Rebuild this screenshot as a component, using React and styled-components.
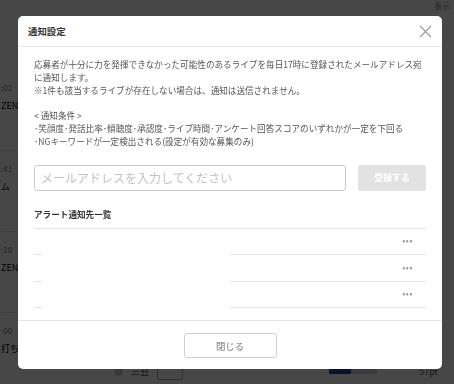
import React from "react"
import styled, { createGlobalStyle } from "styled-components"

const GlobalStyle = createGlobalStyle`
  html, body {
    margin: 0;
    padding: 0;
    width: 454px;
    height: 384px;
    overflow: hidden;
    font-family: "Noto Sans CJK JP", "Noto Sans", sans-serif;
  }
`;

/* background page (dimmed by the overlay) */
const Page = styled.div`
  position: relative;
  width: 454px;
  height: 384px;
  background: #fff;
  overflow: hidden;
`;
const PageTop = styled.div`
  display: flex;
  justify-content: flex-end;
  height: 70px;
  padding-right: 4px;
  font-size: 8px;
  color: #888;
`;
const SideList = styled.div`
  display: flex;
  flex-direction: column;
  padding-left: 1px;
  width: 60px;
`;
const SideRow = styled.div`
  display: flex;
  flex-direction: column;
  gap: 6px;
  height: 81px;
  padding-top: 12px;
  box-sizing: border-box;
  border-bottom: 1px solid #ddd;
  font-size: 9px;
  color: #000;
`;
const SideTime = styled.span`
  color: #777;
  font-size: 8px;
`;
const BottomBar = styled.div`
  position: absolute;
  left: 0;
  right: 0;
  bottom: 4px;
  display: flex;
  align-items: center;
  padding-left: 114px;
  gap: 8px;
  font-size: 9px;
  color: #555;
`;
const SmallBox = styled.div`
  width: 24px;
  height: 16px;
  border: 1px solid #aaa;
  border-radius: 2px;
`;
const Meter = styled.div`
  display: flex;
  margin-left: 138px;
  width: 48px;
  height: 6px;
  background: #ccd;
`;
const MeterFill = styled.div`
  width: 22px;
  background: #1c4aa0;
`;
const Pt = styled.span`
  margin-left: auto;
  margin-right: 16px;
`;

/* modal */
const Overlay = styled.div`
  position: fixed;
  inset: 0;
  background: rgba(0, 0, 0, 0.72);
  display: flex;
  align-items: flex-start;
  padding: 16px 0 0 18px;
`;
const Modal = styled.div`
  width: 424px;
  background: #fff;
  border-radius: 5px;
  display: flex;
  flex-direction: column;
  color: #555;
`;
const Header = styled.div`
  display: flex;
  align-items: center;
  justify-content: space-between;
  height: 30px;
  padding: 0 10px;
  border-bottom: 1px solid #e6e6e6;
`;
const Title = styled.h1`
  margin: 0;
  font-size: 9.4px;
  font-weight: 700;
  color: #333;
`;
const CloseButton = styled.button`
  display: flex;
  padding: 0;
  border: none;
  background: none;
  cursor: pointer;
`;
const Body = styled.div`
  padding: 11px 16px 12px;
`;
const Notice = styled.div`
  font-size: 8.6px;
  line-height: 12.8px;
  color: #555;
  p {
    margin: 0;
  }
`;
const FormRow = styled.div`
  display: flex;
  gap: 12px;
  margin-top: 17px;
`;
const EmailInput = styled.input`
  flex: 1;
  height: 26px;
  box-sizing: border-box;
  border: 1px solid #ccc;
  border-radius: 3px;
  padding: 0 6px;
  font-family: "Noto Sans CJK JP", sans-serif;
  font-size: 12px;
  outline: none;
  &::placeholder {
    color: #c2c2c2;
  }
`;
const RegisterButton = styled.button`
  width: 68px;
  height: 26px;
  border: none;
  border-radius: 3px;
  background: #e2e2e2;
  color: #fff;
  font-family: inherit;
  font-size: 9px;
  font-weight: 700;
`;
const SectionTitle = styled.h2`
  margin: 17px 0 0;
  font-size: 8.6px;
  line-height: 12.8px;
  font-weight: 700;
  color: #333;
`;
const List = styled.div`
  display: grid;
  grid-template-columns: 195px 1fr;
  margin-top: 8px;
  border-top: 1px solid #e6e6e6;
`;
const LeftCell = styled.div`
  position: relative;
  height: ${p => p.$h}px;
  &::after {
    content: "";
    position: absolute;
    left: 0;
    bottom: 0;
    width: 8px;
    height: 1px;
    background: #e2e2e2;
  }
`;
const RightCell = styled.div`
  display: flex;
  align-items: center;
  justify-content: flex-end;
  height: ${p => p.$h}px;
  padding-right: 13px;
  border-bottom: 1px solid #e6e6e6;
  box-sizing: border-box;
`;
const Dots = styled.span`
  font-size: 9px;
  letter-spacing: 0.5px;
  color: #999;
  line-height: 1;
  margin-top: -2px;
`;
const Footer = styled.div`
  display: flex;
  justify-content: center;
  padding: 12px 0 11px;
  border-top: 1px solid #e6e6e6;
`;
const CloseFooterButton = styled.button`
  width: 93px;
  height: 25px;
  border: 1px solid #cfcfcf;
  border-radius: 3px;
  background: #fff;
  color: #777;
  font-family: inherit;
  font-size: 9.4px;
`;

const rows = [26, 27, 26];

export default function App() {
  return (
    <>
      <GlobalStyle />
      <Page>
        <PageTop>表示</PageTop>
        <SideList>
          <SideRow><SideTime>:01</SideTime>ZENK</SideRow>
          <SideRow><SideTime>:41</SideTime>ム</SideRow>
          <SideRow><SideTime>:10</SideTime>ZENK</SideRow>
          <SideRow><SideTime>:00</SideTime>打ち</SideRow>
        </SideList>
        <BottomBar>
          <span>▦</span>
          <span>三丑</span>
          <SmallBox />
          <Meter><MeterFill /></Meter>
          <Pt>57pt</Pt>
        </BottomBar>
      </Page>
      <Overlay>
        <Modal>
          <Header>
            <Title>通知設定</Title>
            <CloseButton aria-label="閉じる">
              <svg width="13" height="13" viewBox="0 0 13 13">
                <path d="M1 1L12 12M12 1L1 12" stroke="#9a9a9a" strokeWidth="1.1" fill="none" />
              </svg>
            </CloseButton>
          </Header>
          <Body>
            <Notice>
              <p>応募者が十分に力を発揮できなかった可能性のあるライブを毎日17時に登録されたメールアドレス宛に通知します。</p>
              <p>※1件も該当するライブが存在しない場合は、通知は送信されません。</p>
              <p>&nbsp;</p>
              <p>&lt; 通知条件 &gt;</p>
              <p>･笑顔度･発話比率･傾聴度･承認度･ライブ時間･アンケート回答スコアのいずれかが一定を下回る</p>
              <p>･NGキーワードが一定検出される(設定が有効な募集のみ)</p>
            </Notice>
            <FormRow>
              <EmailInput placeholder="メールアドレスを入力してください" />
              <RegisterButton disabled>登録する</RegisterButton>
            </FormRow>
            <SectionTitle>アラート通知先一覧</SectionTitle>
            <List>
              {rows.map((h, i) => (
                <React.Fragment key={i}>
                  <LeftCell $h={h} />
                  <RightCell $h={h}><Dots>•••</Dots></RightCell>
                </React.Fragment>
              ))}
            </List>
          </Body>
          <Footer>
            <CloseFooterButton>閉じる</CloseFooterButton>
          </Footer>
        </Modal>
      </Overlay>
    </>
  )
}
